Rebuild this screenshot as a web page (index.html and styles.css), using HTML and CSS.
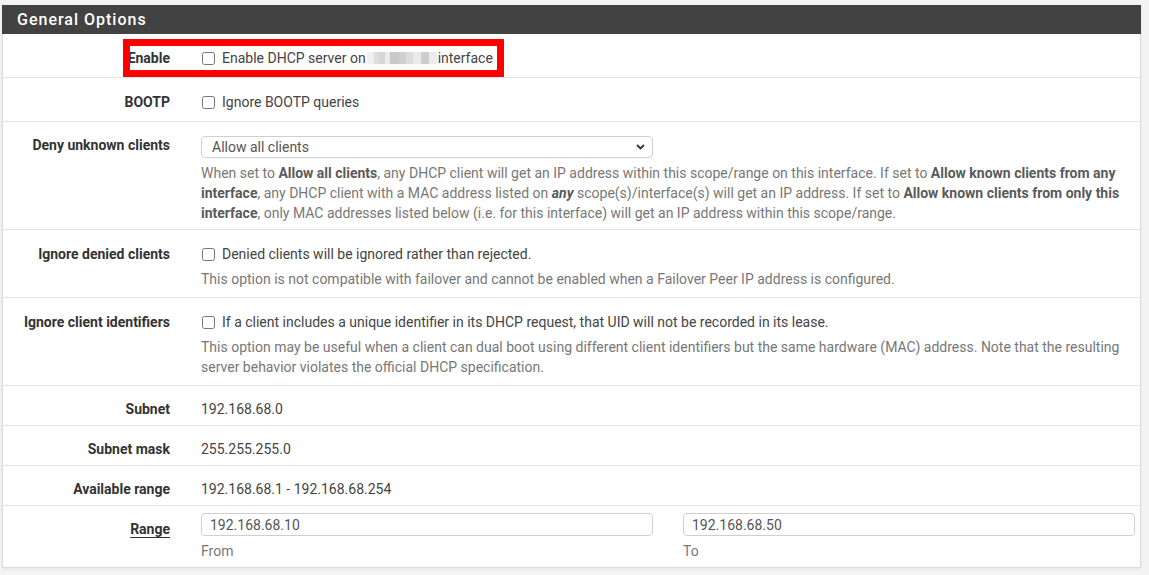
FILE: index.html
```html
<!DOCTYPE html>
<html>
<head>
<meta charset="utf-8">
<link rel="stylesheet" href="styles.css">
</head>
<body>
<div class="panel">
  <div class="panel-heading">General Options</div>
  <div class="panel-body">
    <div class="row cbrow">
      <div class="label">Enable</div>
      <div class="ctl">
        <label class="cb"><input type="checkbox"><span>Enable DHCP server on</span><span class="redact"></span><span>interface</span></label>
      </div>
      <div class="highlight"></div>
    </div>
    <div class="row cbrow">
      <div class="label">BOOTP</div>
      <div class="ctl">
        <label class="cb"><input type="checkbox"><span>Ignore BOOTP queries</span></label>
      </div>
    </div>
    <div class="row">
      <div class="label">Deny unknown clients</div>
      <div class="ctl">
        <div class="select-wrap">
          <select class="select"><option>Allow all clients</option></select>
          <svg class="chev" width="9" height="6" viewBox="0 0 9 6"><path d="M1 1 L4.5 4.5 L8 1" fill="none" stroke="#333" stroke-width="1.8"/></svg>
        </div>
        <div class="help help-sel">When set to <b>Allow all clients</b>, any DHCP client will get an IP address within this scope/range on this interface. If set to <b>Allow known clients from any interface</b>, any DHCP client with a MAC address listed on <b><i>any</i></b> scope(s)/interface(s) will get an IP address. If set to <b>Allow known clients from only this interface</b>, only MAC addresses listed below (i.e. for this interface) will get an IP address within this scope/range.</div>
      </div>
    </div>
    <div class="row cbrow">
      <div class="label">Ignore denied clients</div>
      <div class="ctl">
        <label class="cb"><input type="checkbox"><span>Denied clients will be ignored rather than rejected.</span></label>
        <div class="help help-cb">This option is not compatible with failover and cannot be enabled when a Failover Peer IP address is configured.</div>
      </div>
    </div>
    <div class="row cbrow">
      <div class="label">Ignore client identifiers</div>
      <div class="ctl">
        <label class="cb"><input type="checkbox"><span>If a client includes a unique identifier in its DHCP request, that UID will not be recorded in its lease.</span></label>
        <div class="help help-cb">This option may be useful when a client can dual boot using different client identifiers but the same hardware (MAC) address. Note that the resulting server behavior violates the official DHCP specification.</div>
      </div>
    </div>
    <div class="row">
      <div class="label">Subnet</div>
      <div class="ctl static">192.168.68.0</div>
    </div>
    <div class="row">
      <div class="label">Subnet mask</div>
      <div class="ctl static">255.255.255.0</div>
    </div>
    <div class="row">
      <div class="label">Available range</div>
      <div class="ctl static">192.168.68.1 - 192.168.68.254</div>
    </div>
    <div class="row">
      <div class="label"><span class="ul">Range</span></div>
      <div class="ctl flush">
        <div class="range">
          <div>
            <input class="input" type="text" value="192.168.68.10">
            <div class="help help-in">From</div>
          </div>
          <div>
            <input class="input" type="text" value="192.168.68.50">
            <div class="help help-in">To</div>
          </div>
        </div>
      </div>
    </div>
  </div>
</div>
</body>
</html>
```
FILE: styles.css
```css
* { box-sizing: border-box; }
body {
  margin: 0;
  background: #f4f4f4;
  font-family: Roboto, "Liberation Sans", sans-serif;
  font-size: 14px;
  line-height: 20px;
  color: #333;
}
.panel {
  margin: 5px 8px 8px 2px;
  background: #fff;
  border: 1px solid #dcdcdc;
  border-top: 0;
  box-shadow: 0 1px 3px rgba(0,0,0,0.08);
}
.panel-heading {
  background: #424242;
  color: #fff;
  height: 29px;
  line-height: 29px;
  padding-left: 15px;
  margin: 0 -1px;
  font-size: 16px;
  font-weight: 500;
  letter-spacing: 1px;
}
.row {
  position: relative;
  display: grid;
  grid-template-columns: 182px 1fr;
  padding: 6px 0 6px 0;
  border-top: 1px solid #e3e3e3;
}
.row:first-child { border-top: 0; }
.label {
  text-align: right;
  padding: 7px 15px 0 0;
  font-weight: 700;
  color: #333;
}
.ul { text-decoration: underline; text-underline-offset: 3px; }
.ctl { padding: 7px 5px 0 16px; min-width: 0; }
.cbrow .label, .cbrow .ctl { padding-top: 8px; }
.ctl.flush { padding-top: 0; }
.static { color: #444; }
.cb {
  display: flex;
  align-items: center;
  height: 20px;
  margin-bottom: 3px;
  color: #444;
}
.cb input {
  width: 13px;
  height: 13px;
  margin: 0 7px 0 1px;
  flex: none;
}
.redact {
  display: inline-block;
  width: 70px;
  height: 12px;
  margin: 0 1px 0 1px;
  background: linear-gradient(to right,
    #f0f0f0 0 7px, #dedede 7px 12px, #d6d6d6 12px 18px, #ececec 18px 23px,
    #c9c9c9 23px 32px, #cfcfcf 32px 39px, #dcdcdc 39px 46px, #eaeaea 46px 54px,
    #cdcdcd 54px 62px, #ececec 62px 70px);
}
.highlight {
  position: absolute;
  left: 120px;
  top: 5px;
  width: 381px;
  height: 38px;
  border: 7px solid #ff0000;
  pointer-events: none;
}
.help { color: #777; }
.help b { color: #5a5a5a; }
.help-cb { margin-top: 5px; margin-bottom: 2px; }
.help-sel { margin-top: 5px; }
.help-in { margin-top: 5px; }
.select-wrap {
  position: relative;
  width: calc((100% - 30px) / 2);
  margin-top: 1px;
}
.select {
  display: block;
  width: 100%;
  height: 22px;
  appearance: none;
  -webkit-appearance: none;
  border: 1px solid #cfcfcf;
  border-radius: 4px;
  background: #fff;
  padding: 0 10px;
  font-family: Roboto, "Liberation Sans", sans-serif;
  font-size: 14px;
  color: #555;
}
.chev {
  position: absolute;
  right: 8px;
  top: 8px;
}
.range {
  display: grid;
  grid-template-columns: 1fr 1fr;
  column-gap: 30px;
}
.input {
  display: block;
  width: 100%;
  height: 23px;
  margin-top: 1px;
  border: 1px solid #cfcfcf;
  border-radius: 4px;
  padding: 0 8px;
  font-family: Roboto, "Liberation Sans", sans-serif;
  font-size: 14px;
  color: #555;
  background: #fff;
}
```
